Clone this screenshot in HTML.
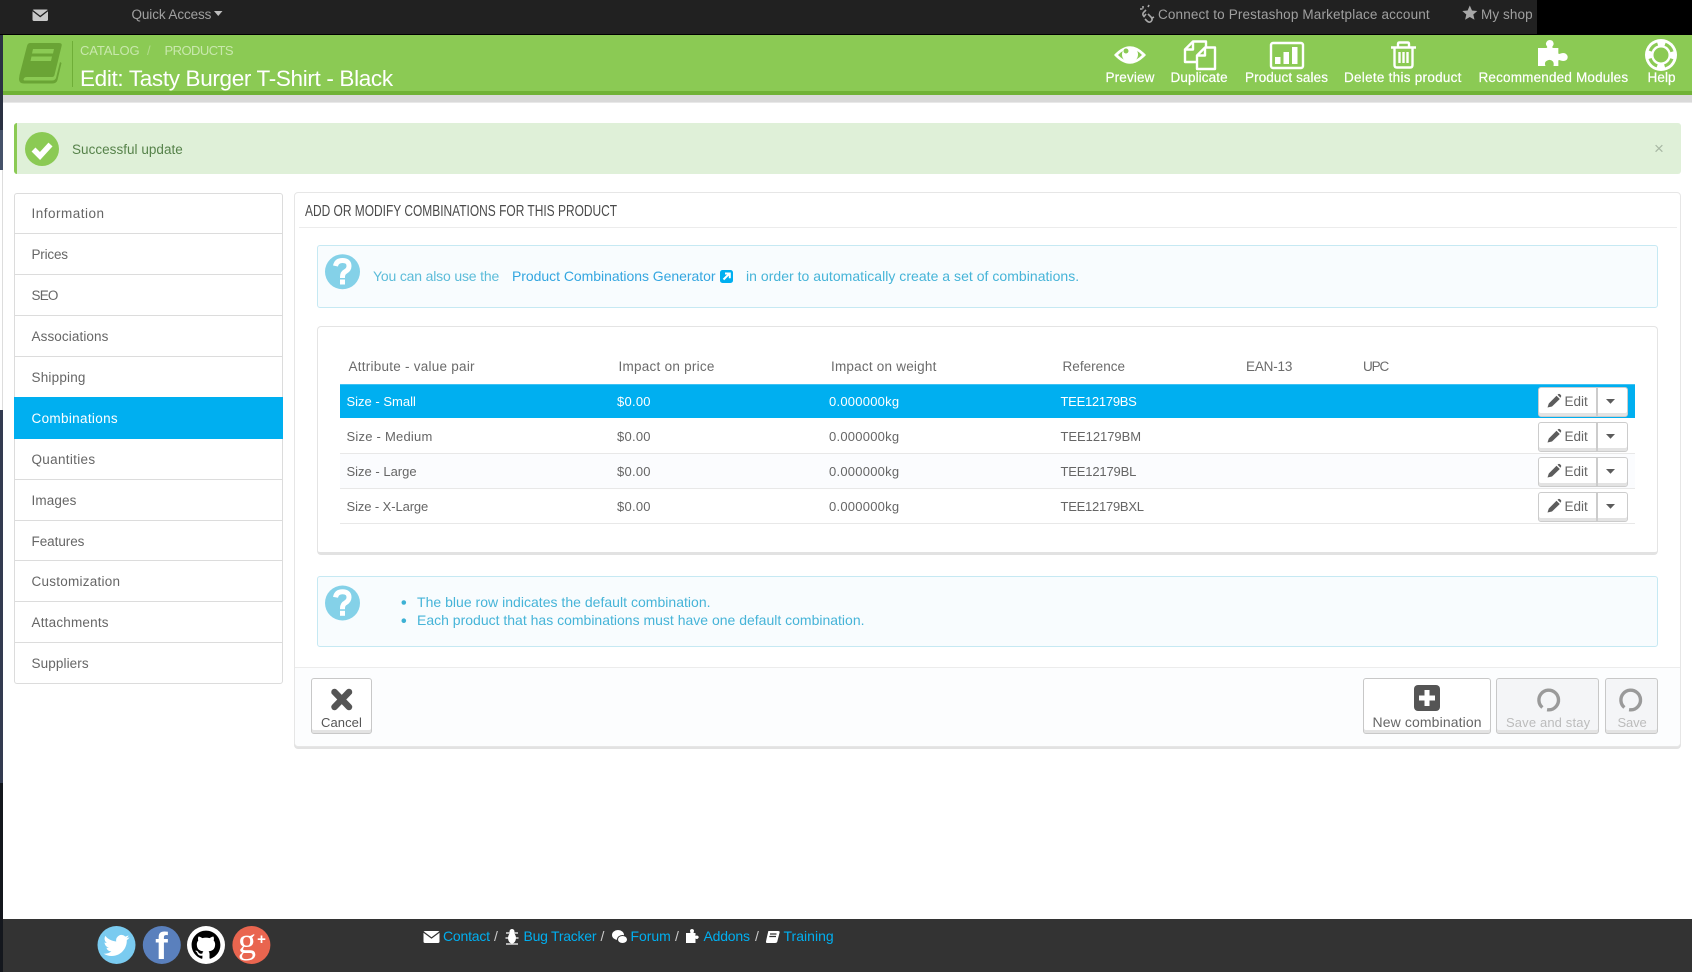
<!DOCTYPE html>
<html lang="en"><head><meta charset="utf-8"><title>Edit: Tasty Burger T-Shirt - Black</title>
<style>
html,body{margin:0;padding:0;background:#fff}
body{position:relative;width:1692px;height:972px;overflow:hidden;font-family:"Liberation Sans",sans-serif;font-size:14px;color:#666}
.a{position:absolute;box-sizing:border-box}
.t{position:absolute;white-space:nowrap;line-height:20px}
svg{position:absolute;left:0;top:0}
.side{position:absolute;left:14px;top:193px;width:269px;height:491px;border:1px solid #dcdcdc;border-radius:3px;box-sizing:border-box}
.si{position:absolute;left:31.5px;font-size:13.5px;color:#666}
.sl{position:absolute;left:15px;width:268px;height:1px;background:#dcdcdc}
.tb{position:absolute;color:#fff;font-size:13.5px;white-space:nowrap;line-height:20px;top:68px;text-align:center;-webkit-text-stroke:.2px #fff}
.th{top:356.5px;color:#6b6b6b;font-size:13.5px}
.r{font-size:13px}
.rl{position:absolute;left:340px;width:1295px;height:1px;background:#e8e8e8}
.btn{position:absolute;left:1538px;width:90px;height:30px;border:1px solid #ccc;border-radius:3px;background:#fff;box-shadow:inset 0 -3px 0 #e3e3e3;box-sizing:border-box}
.btn i{position:absolute;left:57px;top:0;bottom:0;width:2px;background:#ccc}
.big{position:absolute;top:678px;height:56px;border:1px solid #c8c8c8;border-radius:3px;background:#fff;box-shadow:inset 0 -3px 0 #e3e3e3;box-sizing:border-box}
.dis{background:#f4f5f7;border-color:#c8c8c8}
.lnk{color:#00aff0}
.ed{left:1564.5px;color:#666;font-size:13.5px}
</style></head><body>

<!-- left edge -->
<div class="a" style="left:0;top:0;width:3px;height:34px;background:#222"></div>
<div class="a" style="left:0;top:34px;width:3px;height:96px;background:#2a3142"></div>
<div class="a" style="left:0;top:130px;width:3px;height:40px;background:#46526a"></div>
<div class="a" style="left:2px;top:170px;width:1px;height:240px;background:#ddd"></div>
<div class="a" style="left:0;top:410px;width:3px;height:373px;background:#333b50"></div>
<div class="a" style="left:0;top:783px;width:3px;height:189px;background:#14171d"></div>

<!-- top bar -->
<div class="a" style="left:0;top:0;width:1692px;height:35px;background:#000"></div>
<div class="a" style="left:0;top:0;width:1537px;height:34px;background:#212121"></div>
<span class="t" style="left:131.5px;top:5px;color:#a0a0a0;font-size:13.5px;letter-spacing:-.1px">Quick Access</span>
<span class="t" style="left:1158px;top:5px;color:#a0a0a0;font-size:13.5px;letter-spacing:.15px">Connect to Prestashop Marketplace account</span>
<span class="t" style="left:1481px;top:5px;color:#a0a0a0;font-size:13.5px;letter-spacing:.1px">My shop</span>

<!-- header -->
<div class="a" style="left:3px;top:35px;width:1689px;height:60px;background:#8bca54;border-bottom:4px solid #71b237"></div>
<div class="a" style="left:3px;top:95px;width:1689px;height:8px;background:#d9d9d9;border-bottom:1px solid #e8e8e8"></div>
<div class="a" style="left:72px;top:41px;width:1px;height:46px;background:#6fae38"></div>
<span class="t" style="left:80px;top:40.5px;color:#c9e8ad;font-size:13px;letter-spacing:-.1px">CATALOG</span>
<span class="t" style="left:147px;top:40.5px;color:#b3dc8e;font-size:13px">/</span>
<span class="t" style="left:164.5px;top:40.5px;color:#c9e8ad;font-size:13px;letter-spacing:-.55px">PRODUCTS</span>
<span class="t" style="left:80px;top:69px;line-height:20px;color:#fff;font-size:22.5px;letter-spacing:-.34px">Edit: Tasty Burger T-Shirt - Black</span>
<span class="tb" style="left:1105.5px;letter-spacing:.15px">Preview</span>
<span class="tb" style="left:1170.5px;letter-spacing:.1px">Duplicate</span>
<span class="tb" style="left:1245px;letter-spacing:.1px">Product sales</span>
<span class="tb" style="left:1344px;letter-spacing:.27px">Delete this product</span>
<span class="tb" style="left:1478.5px;letter-spacing:.18px">Recommended Modules</span>
<span class="tb" style="left:1647.5px;letter-spacing:.1px">Help</span>

<!-- alert -->
<div class="a" style="left:14px;top:123px;width:1667px;height:51px;background:#dff0d8;border-left:3px solid #8bca54;border-radius:3px"></div>
<span class="t" style="left:72px;top:140px;color:#56824a;font-size:13.5px;letter-spacing:.03px">Successful update</span>
<span class="t" style="left:1654px;top:139px;color:#a8b8a4;font-size:17px">×</span>

<!-- sidebar -->
<div class="side"></div>
<div class="sl" style="top:233px"></div><div class="sl" style="top:274px"></div><div class="sl" style="top:315px"></div><div class="sl" style="top:356px"></div>
<div class="sl" style="top:479px"></div><div class="sl" style="top:520px"></div><div class="sl" style="top:560px"></div><div class="sl" style="top:601px"></div><div class="sl" style="top:642px"></div>
<div class="a" style="left:14px;top:397px;width:269px;height:42px;background:#00aff0"></div>
<span class="t si" style="top:204px;letter-spacing:.5px">Information</span>
<span class="t si" style="top:245px;letter-spacing:-.2px">Prices</span>
<span class="t si" style="top:286px;letter-spacing:-.8px">SEO</span>
<span class="t si" style="top:327px;letter-spacing:.1px">Associations</span>
<span class="t si" style="top:368px;letter-spacing:.2px">Shipping</span>
<span class="t si" style="top:409px;color:#fff;letter-spacing:.33px">Combinations</span>
<span class="t si" style="top:450px;letter-spacing:.31px">Quantities</span>
<span class="t si" style="top:491px;letter-spacing:.12px">Images</span>
<span class="t si" style="top:532px;letter-spacing:-.05px">Features</span>
<span class="t si" style="top:572px;letter-spacing:.25px">Customization</span>
<span class="t si" style="top:613px;letter-spacing:.2px">Attachments</span>
<span class="t si" style="top:654px;letter-spacing:.11px">Suppliers</span>

<!-- main panel -->
<div class="a" style="left:294px;top:192px;width:1387px;height:555px;background:#fff;border:1px solid #e6e6e6;border-radius:4px;box-shadow:0 2px 0 #e2e2e2"></div>
<div class="a" style="left:295px;top:667px;width:1385px;height:79px;background:#fcfdfe;border-top:1px solid #ececec;border-radius:0 0 4px 4px"></div>
<div class="a" style="left:299px;top:227px;width:1378px;height:1px;background:#ececec"></div>
<span class="t" style="left:304.5px;top:202px;color:#4a4a4a;font-size:15.5px;transform-origin:0 50%;transform:scaleX(.771)">ADD OR MODIFY COMBINATIONS FOR THIS PRODUCT</span>

<!-- info 1 -->
<div class="a" style="left:317px;top:245px;width:1341px;height:63px;background:#f8fcfe;border:1px solid #c6e9f3;border-radius:3px"></div>
<span class="t" style="left:373px;top:266px;color:#5cbcd9;letter-spacing:-.17px">You can also use the</span>
<span class="t" style="left:512px;top:266px;color:#34a6e0;letter-spacing:-.04px">Product Combinations Generator</span>
<span class="t" style="left:746px;top:266px;color:#46b4d8;letter-spacing:.03px">in order to automatically create a set of combinations.</span>

<!-- table -->
<div class="a" style="left:317px;top:326px;width:1341px;height:229px;background:#fff;border:1px solid #e4e4e4;border-bottom:3px solid #e2e2e2;border-radius:4px"></div>
<span class="t th" style="left:348.5px;letter-spacing:.25px">Attribute - value pair</span>
<span class="t th" style="left:618.5px;letter-spacing:.26px">Impact on price</span>
<span class="t th" style="left:831px;letter-spacing:.22px">Impact on weight</span>
<span class="t th" style="left:1062.5px;letter-spacing:.03px">Reference</span>
<span class="t th" style="left:1246px;letter-spacing:-.18px">EAN-13</span>
<span class="t th" style="left:1363px;letter-spacing:-1.1px">UPC</span>
<div class="a" style="left:340px;top:384px;width:1295px;height:34px;background:#00aff0;border-top:1px solid #3fc2f3"></div>
<div class="a" style="left:340px;top:454px;width:1295px;height:34px;background:#fbfcfe"></div>
<div class="rl" style="top:453px"></div><div class="rl" style="top:488px"></div><div class="rl" style="top:523px"></div>

<span class="t r" style="left:346.5px;top:392px;color:#fff">Size - Small</span>
<span class="t r" style="left:617px;top:392px;color:#fff;letter-spacing:.25px">$0.00</span>
<span class="t r" style="left:829px;top:392px;color:#fff;letter-spacing:.24px">0.000000kg</span>
<span class="t r" style="left:1060.5px;top:392px;color:#fff;letter-spacing:-.27px">TEE12179BS</span>

<span class="t r" style="left:346.5px;top:426.5px;letter-spacing:.23px">Size - Medium</span>
<span class="t r" style="left:617px;top:426.5px;letter-spacing:.25px">$0.00</span>
<span class="t r" style="left:829px;top:426.5px;letter-spacing:.24px">0.000000kg</span>
<span class="t r" style="left:1060.5px;top:426.5px;letter-spacing:-.04px">TEE12179BM</span>

<span class="t r" style="left:346.5px;top:461.5px">Size - Large</span>
<span class="t r" style="left:617px;top:461.5px;letter-spacing:.25px">$0.00</span>
<span class="t r" style="left:829px;top:461.5px;letter-spacing:.24px">0.000000kg</span>
<span class="t r" style="left:1060.5px;top:461.5px;letter-spacing:-.17px">TEE12179BL</span>

<span class="t r" style="left:346.5px;top:496.5px;letter-spacing:-.1px">Size - X-Large</span>
<span class="t r" style="left:617px;top:496.5px;letter-spacing:.25px">$0.00</span>
<span class="t r" style="left:829px;top:496.5px;letter-spacing:.24px">0.000000kg</span>
<span class="t r" style="left:1060.5px;top:496.5px;letter-spacing:-.25px">TEE12179BXL</span>

<div class="btn" style="top:387px"><i></i></div>
<div class="btn" style="top:422px"><i></i></div>
<div class="btn" style="top:457px"><i></i></div>
<div class="btn" style="top:492px"><i></i></div>
<span class="t ed" style="top:392px">Edit</span>
<span class="t ed" style="top:427px">Edit</span>
<span class="t ed" style="top:462px">Edit</span>
<span class="t ed" style="top:497px">Edit</span>

<!-- info 2 -->
<div class="a" style="left:317px;top:576px;width:1341px;height:71px;background:#f8fcfe;border:1px solid #c6e9f3;border-radius:3px"></div>
<span class="t" style="left:417px;top:591.5px;color:#46b4d8;letter-spacing:.02px">The blue row indicates the default combination.</span>
<span class="t" style="left:417px;top:609.5px;color:#46b4d8">Each product that has combinations must have one default combination.</span>

<!-- buttons -->
<div class="big" style="left:311px;width:61px"></div>
<span class="t" style="left:321px;top:713px;color:#555;font-size:13px;letter-spacing:.08px">Cancel</span>
<div class="big" style="left:1363px;width:128px"></div>
<span class="t" style="left:1372.5px;top:711.5px;color:#666;letter-spacing:.12px">New combination</span>
<div class="big dis" style="left:1496px;width:103px"></div>
<span class="t" style="left:1506px;top:712.5px;color:#bcbcbc;font-size:13px;letter-spacing:.14px">Save and stay</span>
<div class="big dis" style="left:1605px;width:53px"></div>
<span class="t" style="left:1617.5px;top:712.5px;color:#bcbcbc;font-size:13px;letter-spacing:-.15px">Save</span>

<!-- footer -->
<div class="a" style="left:3px;top:919px;width:1689px;height:53px;background:#333"></div>
<span class="t lnk" style="left:443px;top:926px;letter-spacing:-.2px">Contact</span><span class="t" style="left:494px;top:926px;color:#ccc">/</span>
<span class="t lnk" style="left:523.5px;top:926px;letter-spacing:-.25px">Bug Tracker</span><span class="t" style="left:600.5px;top:926px;color:#ccc">/</span>
<span class="t lnk" style="left:630.5px;top:926px;letter-spacing:-.05px">Forum</span><span class="t" style="left:675px;top:926px;color:#ccc">/</span>
<span class="t lnk" style="left:703.5px;top:926px;letter-spacing:-.2px">Addons</span><span class="t" style="left:755px;top:926px;color:#ccc">/</span>
<span class="t lnk" style="left:783.5px;top:926px;letter-spacing:.02px">Training</span>

<!-- all icons -->
<svg width="1692" height="972" viewBox="0 0 1692 972" fill="none">
  <!-- mail -->
  <rect x="32.5" y="9.5" width="15.5" height="11.5" rx="1.5" fill="#c8c8c8"/>
  <path d="M32.5 10.5L40.25 16.5L48 10.5" stroke="#212121" stroke-width="1.3"/>
  <path d="M214 11H222.5L218.25 16Z" fill="#bdbdbd"/>
  <!-- broken chain -->
  <g stroke="#a8a8a8" stroke-width="1.6" fill="none" transform="translate(0 -1)">
    <path d="M1146 11L1143.5 13.5Q1142 15.5 1144 17.5L1146 15M1148 15L1151.5 18.5Q1153 20.5 1151 22.5Q1149 24 1147 22L1145 20"/>
    <path d="M1143 7V9.5M1140 10H1142.5M1151 19.5L1154 18M1148 8L1149 6"/>
  </g>
  <!-- star -->
  <path d="M1469.8 5.5L1472 10.5L1477.3 11L1473.3 14.5L1474.5 19.8L1469.8 17L1465.1 19.8L1466.3 14.5L1462.3 11L1467.6 10.5Z" fill="#a8a8a8"/>

  <!-- book -->
  <path d="M30 43H59Q62.5 43 61.6 46L54.5 75Q54 77 52 77H27Q24 77 23.5 79.5Q23.5 80.5 25 80.5H52Q55 80.5 56 78L60 62L61.5 63L57.5 80Q56.5 83.5 52.5 83.5H24Q19 83.5 19 79L19.5 75L27 46Q27.8 43 30 43Z" fill="#6aa435"/>
  <path d="M33 49H54L53 53.5H32ZM31.5 56.5H52L51 61H30.5Z" fill="#8bca54"/>

  <!-- eye -->
  <path fill-rule="evenodd" d="M1114 55Q1130 37.5 1146 55Q1130 72.5 1114 55ZM1118 55Q1130 67.5 1142 55Q1130 42.5 1118 55Z" fill="#fff"/>
  <circle cx="1130" cy="54.5" r="8" fill="#fff"/>
  <circle cx="1126" cy="51" r="2.5" fill="#8bca54"/>
  <!-- duplicate -->
  <g stroke="#fff" stroke-width="2.4" stroke-linejoin="round" fill="none">
    <path d="M1196 62H1185V49.5L1193 41.5H1206V48"/>
    <path d="M1193 41.5V49.5H1185"/>
    <path d="M1205 47.5H1215V69H1197V55.5Z"/>
    <path d="M1205 47.5V55.5H1197"/>
  </g>
  <!-- sales -->
  <rect x="1271" y="43" width="32" height="25" rx="2" stroke="#fff" stroke-width="2.4"/>
  <path d="M1275 57H1280.5V64H1275ZM1283.5 52H1289V64H1283.5ZM1292 47H1297.5V64H1292Z" fill="#fff"/>
  <!-- trash -->
  <g stroke="#fff" stroke-width="2.4" fill="none">
    <path d="M1391 47.5H1416"/>
    <path d="M1398 47V44Q1398 42.5 1399.5 42.5H1407.5Q1409 42.5 1409 44V47"/>
    <path d="M1394.5 48V65Q1394.5 67.5 1397 67.5H1410Q1412.5 67.5 1412.5 65V48"/>
    <path d="M1399.5 52V63M1403.5 52V63M1407.5 52V63"/>
  </g>
  <!-- puzzle -->
  <path transform="translate(1538 0) scale(1.07 1) translate(-1538 0)" d="M1538 48H1545.5Q1547 48 1546.5 46.5Q1545 44.5 1545.5 43Q1546.5 40 1549 40Q1552 40 1552.5 43Q1553 44.5 1551.5 46.5Q1551 48 1552.5 48H1557V53Q1557 54.5 1558.5 53.8Q1560 53 1561.5 53Q1565 53 1565.8 57Q1565.5 61 1561.5 61Q1560 61 1558.5 60.3Q1557 59.5 1557 61V66H1552.5Q1553 63 1552 61.5Q1550 59.5 1548 60Q1544.5 61 1544.5 63.5Q1544.5 65 1545 66H1538Z" fill="#fff"/>
  <!-- lifebuoy -->
  <circle cx="1661" cy="55" r="16" fill="#fff"/>
  <circle cx="1661" cy="55" r="11.5" stroke="#8bca54" stroke-width="3.2" stroke-dasharray="10.5 7.565" stroke-dashoffset="-3.78"/>
  <circle cx="1661" cy="55" r="7.5" fill="#8bca54"/>

  <!-- check -->
  <circle cx="42" cy="149" r="17" fill="#8bca54"/>
  <path d="M33.5 149.5L40 156L50.5 144.5" stroke="#fff" stroke-width="5.5" fill="none"/>

  <!-- question circles -->
  <circle cx="342.5" cy="271.7" r="17.5" fill="#84d1e8"/>
  <circle cx="342.5" cy="603" r="17.5" fill="#84d1e8"/>
  <g stroke="#fff" stroke-width="5" fill="none">
    <path d="M335.5 266Q336.5 260.5 342.5 260.5Q349 260.5 349 266Q349 269.5 345.5 271.5Q342.5 273 342.5 277V278"/>
    <path d="M335.5 597.3Q336.5 591.8 342.5 591.8Q349 591.8 349 597.3Q349 600.8 345.5 602.8Q342.5 604.3 342.5 608.3V609.3"/>
  </g>
  <rect x="340" y="279.5" width="5" height="5" fill="#fff"/>
  <rect x="340" y="610.8" width="5" height="5" fill="#fff"/>

  <!-- external link -->
  <rect x="720" y="270" width="13" height="13" rx="2.5" fill="#00aff0"/>
  <path d="M723.5 279.5L729 274M725 273.5H729.8V278.3" stroke="#fff" stroke-width="2" fill="none"/>

  <!-- bullets -->
  <circle cx="403.8" cy="602.5" r="2.3" fill="#3db1d4"/>
  <circle cx="403.8" cy="620.7" r="2.3" fill="#3db1d4"/>

  <!-- edit pencils and carets -->
  <g>
    <path d="M1547.5 407.5L1548.8 403.5L1556.5 395.8L1559.8 399L1552 406.5ZM1557.5 394.8L1558.5 394Q1559.3 393.6 1560 394.3L1561 395.3Q1561.5 396 1561 396.8L1560.5 397.8Z" fill="#5c5c5c"/>
    <path d="M1606 399H1615L1610.5 403.8Z" fill="#5c5c5c"/>
  </g>
  <g transform="translate(0 35)"><path d="M1547.5 407.5L1548.8 403.5L1556.5 395.8L1559.8 399L1552 406.5ZM1557.5 394.8L1558.5 394Q1559.3 393.6 1560 394.3L1561 395.3Q1561.5 396 1561 396.8L1560.5 397.8Z" fill="#5c5c5c"/><path d="M1606 399H1615L1610.5 403.8Z" fill="#5c5c5c"/></g>
  <g transform="translate(0 70)"><path d="M1547.5 407.5L1548.8 403.5L1556.5 395.8L1559.8 399L1552 406.5ZM1557.5 394.8L1558.5 394Q1559.3 393.6 1560 394.3L1561 395.3Q1561.5 396 1561 396.8L1560.5 397.8Z" fill="#5c5c5c"/><path d="M1606 399H1615L1610.5 403.8Z" fill="#5c5c5c"/></g>
  <g transform="translate(0 105)"><path d="M1547.5 407.5L1548.8 403.5L1556.5 395.8L1559.8 399L1552 406.5ZM1557.5 394.8L1558.5 394Q1559.3 393.6 1560 394.3L1561 395.3Q1561.5 396 1561 396.8L1560.5 397.8Z" fill="#5c5c5c"/><path d="M1606 399H1615L1610.5 403.8Z" fill="#5c5c5c"/></g>

  <!-- cancel x -->
  <path d="M334.5 692L349 707M349 692L334.5 707" stroke="#555" stroke-width="6.5" stroke-linecap="round"/>
  <!-- plus -->
  <rect x="1414" y="685" width="26" height="26" rx="4" fill="#555"/>
  <path d="M1427 690V706M1419 698H1435" stroke="#fff" stroke-width="5"/>
  <!-- spinners -->
  <circle cx="1548.7" cy="700" r="9.8" stroke="#9a9a9a" stroke-width="3.4" stroke-dasharray="56 5.6" transform="rotate(130 1548.7 700)"/>
  <circle cx="1630.7" cy="700" r="9.8" stroke="#9a9a9a" stroke-width="3.4" stroke-dasharray="56 5.6" transform="rotate(130 1630.7 700)"/>

  <!-- social -->
  <circle cx="116.5" cy="945" r="19" fill="#7acbf0"/>
  <path transform="translate(103.5 932.5) scale(1.08)" fill="#fff" d="M23.95 4.57a10 10 0 0 1-2.82.77 4.96 4.96 0 0 0 2.16-2.72c-.95.55-2 .96-3.12 1.19a4.92 4.92 0 0 0-8.38 4.48C7.69 8.1 4.07 6.13 1.64 3.16a4.82 4.82 0 0 0-.66 2.47c0 1.71.87 3.21 2.19 4.1a4.9 4.9 0 0 1-2.23-.61v.06a4.92 4.92 0 0 0 3.95 4.83 5 5 0 0 1-2.21.08 4.94 4.94 0 0 0 4.6 3.42A9.87 9.87 0 0 1 0 19.54a14 14 0 0 0 7.56 2.21c9.05 0 14-7.5 14-13.98 0-.21 0-.42-.01-.63a9.94 9.94 0 0 0 2.46-2.55z"/>
  <circle cx="161.8" cy="945" r="19" fill="#5a80bd"/>
  <text x="161.5" y="959" font-family="Liberation Sans, sans-serif" font-weight="bold" font-size="38" fill="#fff" text-anchor="middle">f</text>
  <circle cx="206" cy="945" r="19" fill="#fff"/>
  <path transform="translate(191.6 930.3) scale(1.2)" fill="#000" d="M12 .297c-6.63 0-12 5.373-12 12 0 5.303 3.438 9.8 8.205 11.385.6.113.82-.258.82-.577 0-.285-.01-1.04-.015-2.04-3.338.724-4.042-1.61-4.042-1.61C4.422 18.07 3.633 17.7 3.633 17.7c-1.087-.744.084-.729.084-.729 1.205.084 1.838 1.236 1.838 1.236 1.07 1.835 2.809 1.305 3.495.998.108-.776.417-1.305.76-1.605-2.665-.3-5.466-1.332-5.466-5.93 0-1.31.465-2.38 1.235-3.22-.135-.303-.54-1.523.105-3.176 0 0 1.005-.322 3.3 1.23.96-.267 1.98-.399 3-.405 1.02.006 2.04.138 3 .405 2.28-1.552 3.285-1.23 3.285-1.23.645 1.653.24 2.873.12 3.176.765.84 1.23 1.91 1.23 3.22 0 4.61-2.805 5.625-5.475 5.92.42.36.81 1.096.81 2.22 0 1.606-.015 2.896-.015 3.286 0 .315.21.69.825.57C20.565 22.092 24 17.592 24 12.297c0-6.627-5.373-12-12-12"/>
  <circle cx="251.4" cy="945" r="19" fill="#e9654f"/>
  <text x="247" y="953" font-family="Liberation Serif, serif" font-size="36" fill="#fff" text-anchor="middle">g</text>
  <text x="261.5" y="944" font-family="Liberation Sans, sans-serif" font-weight="bold" font-size="15" fill="#fff" text-anchor="middle">+</text>

  <!-- footer small icons -->
  <rect x="423.5" y="931" width="16" height="12" rx="1.5" fill="#fff"/>
  <path d="M423.5 932L431.5 938L439.5 932" stroke="#333" stroke-width="1.2"/>
  <ellipse cx="512" cy="938" rx="4" ry="5.5" fill="#fff"/><circle cx="512" cy="931.5" r="2.5" fill="#fff"/>
  <path d="M506 933L518 933M505.5 938H518.5M506 944L518 944" stroke="#fff" stroke-width="1.3"/>
  <ellipse cx="618" cy="935" rx="6" ry="5" fill="#fff"/><ellipse cx="622.5" cy="939.5" rx="5" ry="4" fill="#fff" stroke="#333"/>
  <path d="M686 933H690.5Q690 931.5 690 930.5Q690.5 929 692 929Q693.5 929 694 930.5Q694 931.5 693.5 933H695.5V936Q697 935 698 936Q699.5 937 698 938.5Q697 939.5 695.5 938.5V943H686Z" fill="#fff"/>
  <path d="M768.5 931H778Q780 931 779.6 932.5L777.3 941.5Q777 943 775 943H767Q765.8 943 766 941.5L766.5 939L768 932.5Q768.2 931 768.5 931Z" fill="#fff"/>
  <path d="M770 934H776.5M769.3 936.5H776" stroke="#333" stroke-width="1.2"/>
</svg>
</body></html>
